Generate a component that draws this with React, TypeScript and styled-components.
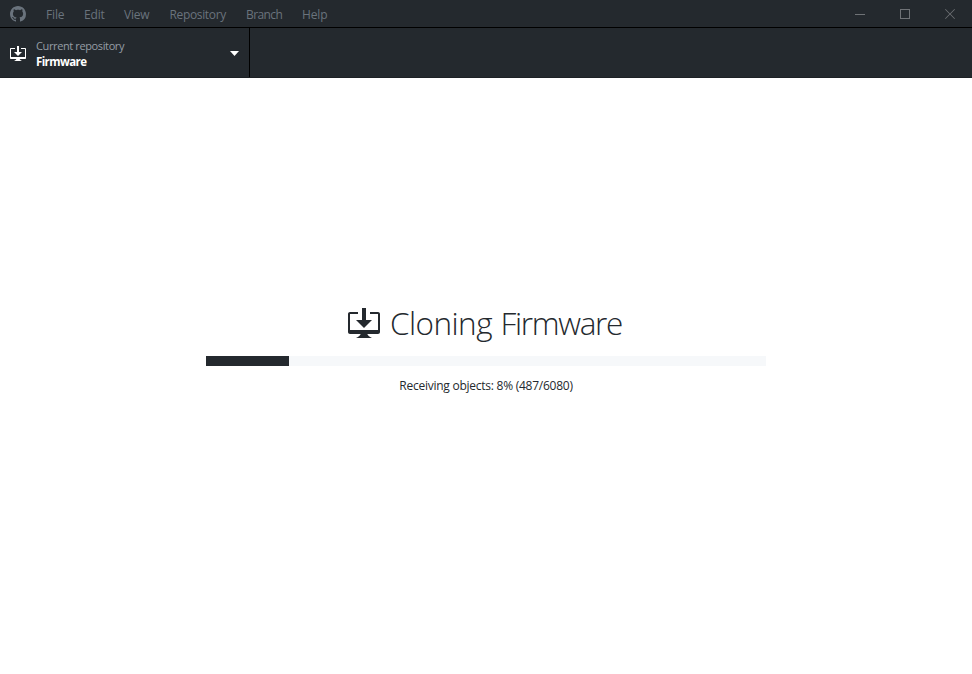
import React from "react";
import styled, { createGlobalStyle } from "styled-components";

const GlobalStyle = createGlobalStyle`
  * { box-sizing: border-box; }
  html, body, #root { height: 100%; margin: 0; }
  body {
    overflow: hidden;
    background: #fff;
    color: #24292e;
    font: 12px/18px "Segoe UI", "Open Sans", "Noto Sans", sans-serif;
    cursor: default;
  }
`;

const Window = styled.div`
  display: flex;
  flex-direction: column;
  height: 100vh;
`;

const TitleBar = styled.header`
  display: flex;
  flex: none;
  height: 28px;
  padding-left: 10px;
  background: #24292e;
  border-bottom: 1px solid #000;
  color: #6a737d;
`;

const Mark = styled.svg`
  flex: none;
  width: 16px;
  height: 16px;
  margin: 6px 10px 0 0;
  fill: #6a737d;
`;

const Menu = styled.nav`
  display: flex;
  flex: 1;
`;

const MenuItem = styled.span<{ $width: number; $spacing: number }>`
  width: ${(p) => p.$width}px;
  padding: 6px 0 0 10px;
  font-size: 12px;
  letter-spacing: ${(p) => p.$spacing}px;
  white-space: nowrap;
`;

const WindowButton = styled.span`
  display: flex;
  align-items: center;
  justify-content: center;
  width: 45px;
  height: 27px;

  svg {
    display: block;
    fill: #6f7276;
  }
`;

const Toolbar = styled.div`
  display: flex;
  flex: none;
  height: 50px;
  background: #24292e;
  border-bottom: 1px solid #1d2125;
`;

const RepositoryButton = styled.div`
  display: flex;
  align-items: center;
  width: 250px;
  padding: 2px 10px 0;
  border-right: 1px solid #000;
  color: #fff;

  svg {
    flex: none;
    fill: #fff;
  }
`;

const RepositoryText = styled.div`
  flex: 1;
  margin-left: 10px;
`;

const Description = styled.div`
  color: #959da5;
  font-size: 11px;
  line-height: 16px;
  letter-spacing: -0.38px;
`;

const RepositoryName = styled.div`
  font-size: 11.5px;
  font-weight: 700;
  line-height: 16px;
  letter-spacing: -0.6px;
`;

const Content = styled.main`
  display: flex;
  flex: 1;
  flex-direction: column;
  align-items: center;
  padding-top: 226px;
`;

const Heading = styled.div`
  display: flex;
  width: 276px;
  height: 40px;
`;

const HeadingIcon = styled.svg`
  flex: none;
  margin: 4px 10px 0 0;
  fill: #24292e;
`;

const Title = styled.h1`
  margin: 0;
  font-size: 31.5px;
  font-weight: 300;
  line-height: 38px;
  letter-spacing: -0.55px;
  white-space: nowrap;
`;

const TitleName = styled.span`
  margin-left: 1px;
  letter-spacing: -1.35px;
`;

const ProgressTrack = styled.div`
  width: 560px;
  height: 10px;
  margin-top: 12px;
  background: #f6f8fa;
`;

const ProgressBar = styled.div`
  height: 100%;
  background: #24292e;
`;

const Status = styled.div`
  margin-top: 11px;
  font-size: 12px;
  letter-spacing: -0.25px;
  white-space: nowrap;
`;

const MENU = [
  { label: "File", width: 38, spacing: -0.15 },
  { label: "Edit", width: 40, spacing: -0.15 },
  { label: "View", width: 45.5, spacing: -0.2 },
  { label: "Repository", width: 76.5, spacing: -0.35 },
  { label: "Branch", width: 56, spacing: -0.6 },
  { label: "Help", width: 45, spacing: -0.15 },
];

const PROGRESS = 83 / 560;

const downloadPath =
  "M4 6h3V0h2v6h3l-4 4-4-4zm11-4h-4v1h4v8H1V3h4V2H1c-.55 0-1 .45-1 1v9c0 .55.45 1 1 1h5.34c-.25.61-.86 1.39-2.34 2h8c-1.48-.61-2.09-1.39-2.34-2H15c.55 0 1-.45 1-1V3c0-.55-.45-1-1-1z";

export default function App() {
  return (
    <Window>
      <GlobalStyle />
      <TitleBar>
        <Mark viewBox="0 0 16 16">
          <path
            fillRule="evenodd"
            d="M8 0C3.58 0 0 3.58 0 8c0 3.54 2.29 6.53 5.47 7.59.4.07.55-.17.55-.38 0-.19-.01-.82-.01-1.49-2.01.37-2.53-.49-2.69-.94-.09-.23-.48-.94-.82-1.13-.28-.15-.68-.52-.01-.53.63-.01 1.08.58 1.23.82.72 1.21 1.87.87 2.33.66.07-.52.28-.87.51-1.07-1.78-.2-3.64-.89-3.64-3.95 0-.87.31-1.59.82-2.15-.08-.2-.36-1.02.08-2.12 0 0 .67-.21 2.2.82.64-.18 1.32-.27 2-.27.68 0 1.36.09 2 .27 1.53-1.04 2.2-.82 2.2-.82.44 1.1.16 1.92.08 2.12.51.56.82 1.27.82 2.15 0 3.07-1.87 3.75-3.65 3.95.29.25.54.73.54 1.48 0 1.07-.01 1.93-.01 2.2 0 .21.15.46.55.38A8.013 8.013 0 0 0 16 8c0-4.42-3.58-8-8-8z"
          />
        </Mark>
        <Menu>
          {MENU.map((m) => (
            <MenuItem key={m.label} $width={m.width} $spacing={m.spacing}>
              {m.label}
            </MenuItem>
          ))}
        </Menu>
        <WindowButton aria-label="Minimize">
          <svg width="10" height="10" viewBox="0 0 10 10" shapeRendering="crispEdges">
            <path d="M0 5h10v1H0z" />
          </svg>
        </WindowButton>
        <WindowButton aria-label="Maximize">
          <svg width="10" height="10" viewBox="0 0 10 10" shapeRendering="crispEdges">
            <path fillRule="evenodd" d="M0 0h10v10H0zM1 1v8h8V1z" />
          </svg>
        </WindowButton>
        <WindowButton aria-label="Close">
          <svg width="10" height="10" viewBox="0 0 12 12">
            <path d="M.7 0 6 5.3 11.3 0l.7.7L6.7 6l5.3 5.3-.7.7L6 6.7.7 12l-.7-.7L5.3 6 0 .7z" />
          </svg>
        </WindowButton>
      </TitleBar>
      <Toolbar>
        <RepositoryButton>
          <svg width="16" height="16" viewBox="0 0 16 16">
            <path d={downloadPath} />
          </svg>
          <RepositoryText>
            <Description>Current repository</Description>
            <RepositoryName>Firmware</RepositoryName>
          </RepositoryText>
          <svg width="9" height="5" viewBox="0 0 9 5">
            <path d="M0 0h9L4.5 5z" />
          </svg>
        </RepositoryButton>
      </Toolbar>
      <Content>
        <Heading>
          <HeadingIcon width="32" height="32" viewBox="0 0 16 16">
            <path d={downloadPath} />
          </HeadingIcon>
          <Title>
            Cloning <TitleName>Firmware</TitleName>
          </Title>
        </Heading>
        <ProgressTrack>
          <ProgressBar style={{ width: `${PROGRESS * 100}%` }} />
        </ProgressTrack>
        <Status>Receiving objects: 8% (487/6080)</Status>
      </Content>
    </Window>
  );
}
